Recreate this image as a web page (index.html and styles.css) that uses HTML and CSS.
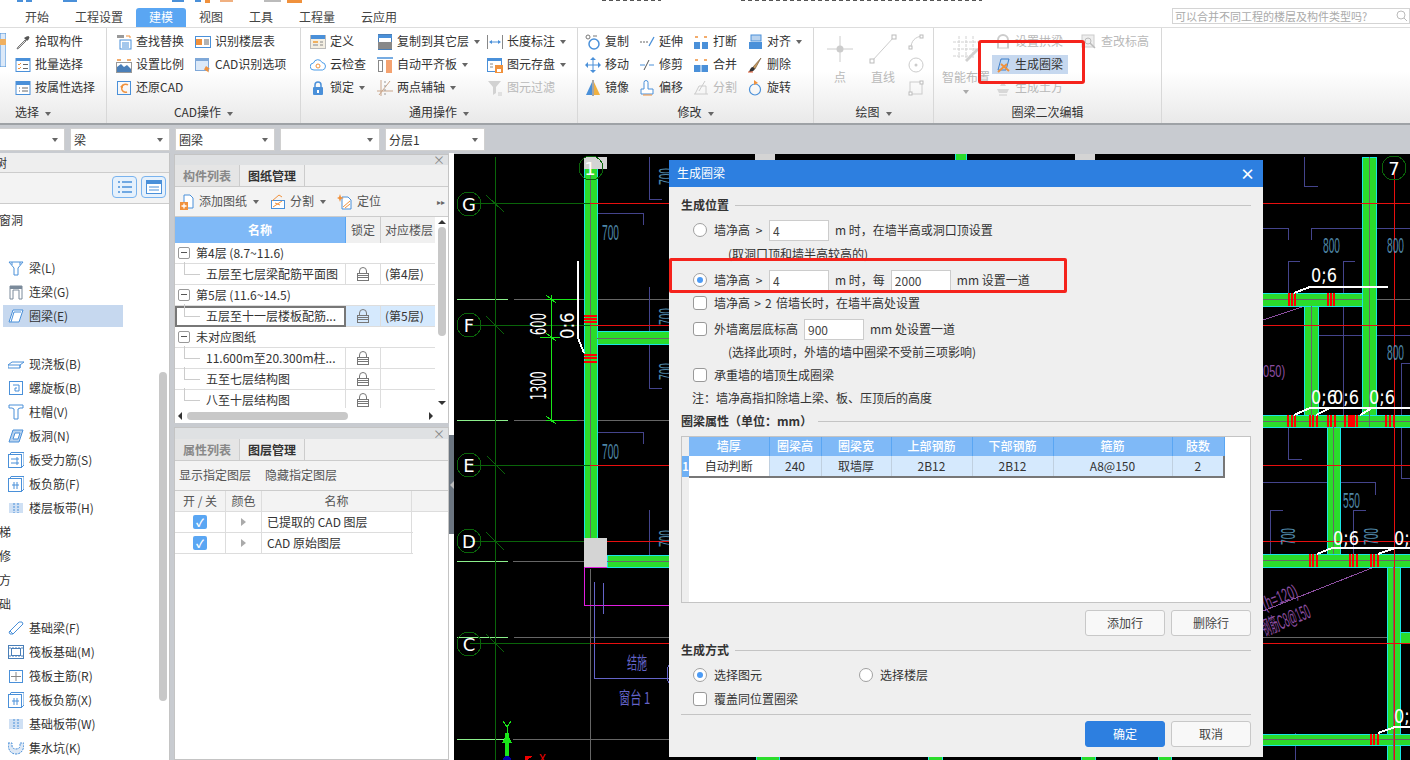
FILE: index.html
```html
<!DOCTYPE html>
<html lang="zh-CN">
<head>
<meta charset="utf-8">
<title>生成圈梁</title>
<link rel="stylesheet" href="styles.css">
</head>
<body>
<svg class="defs" width="0" height="0" aria-hidden="true">
  <symbol id="pick" viewBox="0 0 16 16"><path d="M10 6 3 13l-1 2 2-1 7-7z" fill="#ddd" stroke="#777"/><path d="m9 4 3 3 1.500-1.500 1-2-1-1.500-2 .5z" fill="#555"/></symbol>
  <symbol id="batch" viewBox="0 0 16 16"><rect x="1" y="1.500" width="14" height="13" fill="#fff" stroke="#4a90d9"/><rect x="1" y="1" width="14" height="3" fill="#4a90d9"/><path d="m3 7 1 1 2-2M3 11l1 1 2-2" fill="none" stroke="#f0913c"/><path d="M8 7.500h5M8 11.500h5" stroke="#666"/></symbol>
  <symbol id="attr" viewBox="0 0 16 16"><rect x="1" y="1.500" width="14" height="13" fill="#fff" stroke="#4a90d9"/><rect x="1" y="1" width="14" height="4" fill="#4a90d9"/><path d="M4 8h1M7 8h6M4 11h1M7 11h6" stroke="#666"/></symbol>
  <symbol id="find" viewBox="0 0 16 16"><rect x="1" y="1" width="7" height="3" fill="#999"/><path d="M10 2h4v2" fill="none" stroke="#f0913c"/><rect x="4" y="6" width="11" height="9" fill="#fff" stroke="#4a90d9"/><path d="M6 9h7M6 11h7M6 13h7" stroke="#4a90d9"/></symbol>
  <symbol id="scale" viewBox="0 0 16 16"><path d="M1 3h4M11 3h4" stroke="#f0913c" stroke-width="1.500"/><path d="M1 15V10l4-3 3 3 3-2 4 4v3z" fill="#4a7fb8"/><rect x=".5" y="5.500" width="15" height="10" fill="none" stroke="#999"/></symbol>
  <symbol id="restore" viewBox="0 0 16 16"><rect x="1.500" y="1.500" width="13" height="13" fill="none" stroke="#4a90d9"/><path d="M12 5a4 4 0 1 0-1 7" fill="none" stroke="#f0913c" stroke-width="1.500"/><path d="m4 7 3-3v4z" fill="#f0913c"/></symbol>
  <symbol id="floor" viewBox="0 0 16 16"><rect x=".5" y="2.500" width="15" height="11" fill="#fff" stroke="#4a90d9"/><rect x="1" y="5" width="6" height="6" fill="#f0913c"/><path d="M9 6h5M9 8h5M9 10h5" stroke="#666"/></symbol>
  <symbol id="cadopt" viewBox="0 0 16 16"><rect x=".5" y="1.500" width="13" height="12" fill="#dce9f8" stroke="#7fa8d8"/><rect x="1" y="1" width="13" height="3" fill="#7fa8d8"/><path d="m11 9 4 3-2 .5 1 3-5-3z" fill="#f0913c"/></symbol>
  <symbol id="define" viewBox="0 0 16 16"><rect x=".5" y="1.500" width="15" height="13" fill="#f4efe3" stroke="#bbb"/><rect x="1" y="1" width="14" height="4" fill="#4a90d9"/><rect x="3" y="7" width="5" height="2" fill="#f0b060"/><rect x="3" y="10" width="5" height="2" fill="#bbb"/><path d="M10 8h3M10 11h3" stroke="#888"/></symbol>
  <symbol id="cloud" viewBox="0 0 16 16"><path d="M4 13a3.500 3.500 0 0 1-.5-7A4.500 4.500 0 0 1 12 5.500 3.800 3.800 0 0 1 12.500 13z" fill="#fff" stroke="#4a9be8"/><circle cx="8" cy="9" r="2" fill="none" stroke="#f0913c"/></symbol>
  <symbol id="lockb" viewBox="0 0 16 16"><path d="M5 8V5a3 3 0 0 1 6 0v3" fill="none" stroke="#4a90d9" stroke-width="1.500"/><rect x="3" y="7" width="10" height="8" rx="1" fill="#4a90d9"/><rect x="7" y="10" width="2" height="3" fill="#fff"/></symbol>
  <symbol id="copyf" viewBox="0 0 16 16"><rect x="1.500" y=".5" width="13" height="15" fill="#fff" stroke="#4a7fb8"/><rect x="1" y="1" width="14" height="3" fill="#4a90d9"/><rect x="1" y="8" width="14" height="7" fill="#888"/></symbol>
  <symbol id="align" viewBox="0 0 16 16"><path d="M0 1h16" stroke="#4a90d9" stroke-width="1.500"/><rect x="1.500" y="3.500" width="4" height="11" fill="#fff" stroke="#888"/><rect x="9" y="3" width="6" height="13" fill="#f4a270"/></symbol>
  <symbol id="axis" viewBox="0 0 16 16"><path d="M0 11h16M4 0v16M13 1 2 15" fill="none" stroke="#c9a58a"/><path d="M8 1v14" stroke="#999" stroke-dasharray="2 2"/></symbol>
  <symbol id="dim" viewBox="0 0 16 16"><path d="M.5 1v14M15.500 1v14" stroke="#888"/><path d="M3 8h10" stroke="#4a90d9"/><path d="m2 8 3-2v4zm12 0-3-2v4z" fill="#4a90d9"/></symbol>
  <symbol id="save" viewBox="0 0 16 16"><rect x=".5" y="1.500" width="14" height="13" fill="#fff" stroke="#4a90d9"/><rect x="1" y="1" width="14" height="3" fill="#4a90d9"/><rect x="8" y="8" width="8" height="8" fill="#f0913c"/><rect x="10" y="12" width="4" height="3" fill="#fff"/><path d="M3 7h3M3 10h3" stroke="#888"/></symbol>
  <symbol id="filter" viewBox="0 0 16 16"><path d="M1 1h13L9 7v6l-3 2V7z" fill="#d2d2d2"/><path d="M11 13h4M11 15h4" stroke="#ccc"/></symbol>
  <symbol id="copy" viewBox="0 0 16 16"><circle cx="3" cy="3" r="2" fill="none" stroke="#777"/><circle cx="9" cy="10" r="5" fill="none" stroke="#4a90d9" stroke-width="1.500"/><path d="M8 2h4" stroke="#777"/></symbol>
  <symbol id="move" viewBox="0 0 16 16"><path d="M8 2v12M2 8h12" stroke="#4a90d9"/><path d="m8 0 3 3H5zm0 16-3-3h6zM0 8l3-3v6zm16 0-3 3V5z" fill="#4a90d9"/></symbol>
  <symbol id="mirror" viewBox="0 0 16 16"><path d="M1 15 7 2v13z" fill="#4a90d9"/><path d="M9 15V2l6 13z" fill="#f0b040"/><path d="M8 0v16" stroke="#555"/></symbol>
  <symbol id="extend" viewBox="0 0 16 16"><path d="M1 8h8" stroke="#666" stroke-dasharray="2 1"/><path d="m10 12 5-9" stroke="#4a90d9" stroke-width="1.300"/></symbol>
  <symbol id="trim" viewBox="0 0 16 16"><path d="M1 8h5M10 8h5" stroke="#4a90d9"/><path d="m5 13 5-10" stroke="#555"/></symbol>
  <symbol id="offset" viewBox="0 0 16 16"><path d="M5 9V2.500a2 2 0 0 1 4 0V9h5v5H2V9z" fill="#fff" stroke="#4a90d9"/><path d="M4 15h9" stroke="#f0913c"/></symbol>
  <symbol id="breakk" viewBox="0 0 16 16"><path d="M2 3h3M11 3h3" stroke="#f0913c" stroke-width="1.500"/><rect x="1" y="8" width="6" height="7" fill="#4a90d9"/><rect x="9" y="8" width="6" height="7" fill="#4a90d9"/></symbol>
  <symbol id="merge" viewBox="0 0 16 16"><path d="M2 3h3M11 3h3" stroke="#f0913c" stroke-width="1.500"/><rect x="1" y="8" width="14" height="7" fill="#4a90d9"/><path d="M8 8v7" stroke="#fff"/></symbol>
  <symbol id="split" viewBox="0 0 16 16"><path d="M1 14h14M2 14l4-8h7v8M12 1 6 11" fill="none" stroke="#ccc"/></symbol>
  <symbol id="alignr" viewBox="0 0 16 16"><rect x="4" y="1" width="10" height="6" fill="#b8d2ee" stroke="#4a90d9"/><rect x="2" y="8" width="13" height="7" fill="#4a90d9"/></symbol>
  <symbol id="erase" viewBox="0 0 16 16"><path d="m14 1-8 9 2 2z" fill="#c89a5e" stroke="#6c5030" stroke-width=".6"/><path d="M6 10c-2 0-3 2-4 5 3 0 5-1 6-3z" fill="#333"/><path d="M1 15h5" stroke="#e0562c"/></symbol>
  <symbol id="rotate" viewBox="0 0 16 16"><circle cx="8" cy="9.500" r="5.500" fill="none" stroke="#4a90d9" stroke-width="1.200"/><path d="m7 0 4 3-4 2z" fill="#f0913c"/></symbol>
  <symbol id="arch" viewBox="0 0 16 16"><path d="M3 14V6a5 5 0 0 1 10 0v8" fill="none" stroke="#ccc" stroke-width="2"/><path d="M2 14h12" stroke="#ccc"/></symbol>
  <symbol id="ringgen" viewBox="0 0 16 16"><path d="M3 13 6 2h8l-3 11z" fill="#bcd6f2" stroke="#3f7fc8"/><path d="M3 15 12 7M6 7l8 7" stroke="#f0913c" stroke-width="2"/></symbol>
  <symbol id="earth" viewBox="0 0 16 16"><path d="M8 1 5 6h6zM2 9h12l-2 4H4z" fill="#d8d8d8"/><path d="M4 15h8" stroke="#ccc"/></symbol>
  <symbol id="elev" viewBox="0 0 16 16"><rect x="1" y="1" width="12" height="12" fill="#eee" stroke="#ccc"/><circle cx="7" cy="7" r="3" fill="none" stroke="#bbb"/><path d="m9 9 5 5" stroke="#bbb" stroke-width="1.500"/></symbol>
  <symbol id="ptbig" viewBox="0 0 30 30"><path d="M15 2v26M2 15h26" stroke="#ccc"/><circle cx="15" cy="15" r="3.500" fill="#ccc"/></symbol>
  <symbol id="linebig" viewBox="0 0 30 30"><path d="M4 27 26 3" stroke="#ccc"/><rect x="2" y="25" width="4" height="4" fill="#fff" stroke="#bbb"/><rect x="24" y="1" width="4" height="4" fill="#fff" stroke="#bbb"/></symbol>
  <symbol id="arc" viewBox="0 0 16 16"><path d="M3 14C3 7 7 3 14 2" fill="none" stroke="#ccc"/><rect x="1" y="12" width="3" height="3" fill="#fff" stroke="#bbb"/><rect x="12" y="1" width="3" height="3" fill="#fff" stroke="#bbb"/></symbol>
  <symbol id="circ" viewBox="0 0 16 16"><circle cx="8" cy="8" r="7" fill="none" stroke="#ccc"/><circle cx="8" cy="8" r="1.500" fill="#ccc"/></symbol>
  <symbol id="sq" viewBox="0 0 16 16"><rect x="2" y="2" width="12" height="12" fill="none" stroke="#ccc"/><rect x="12" y="1" width="3" height="3" fill="#fff" stroke="#bbb"/><rect x="1" y="12" width="3" height="3" fill="#fff" stroke="#bbb"/></symbol>
  <symbol id="smart" viewBox="0 0 30 30"><path d="M8 2v22M15 2v22M22 2v22M2 8h26M2 15h26M2 22h18" stroke="#d2d2d2" stroke-dasharray="3 1"/><path d="m14 26 12-12 2 2-12 12z" fill="#d0d0d0"/></symbol>
  <symbol id="tbeam" viewBox="0 0 16 16"><path d="M1 2h14l-5 6v7H6V8z" fill="#fff" stroke="#4a90d9"/><path d="M4 2v3M12 2v3" stroke="#4a90d9"/></symbol>
  <symbol id="tlintel" viewBox="0 0 16 16"><path d="M2 2h12v13h-3V6H5v9H2z" fill="#fff" stroke="#7a8a9a"/><rect x="2" y="2" width="12" height="3" fill="#7a8a9a"/></symbol>
  <symbol id="tring" viewBox="0 0 16 16"><path d="M1 14 5 2h10l-4 12z" fill="#fff" stroke="#4a90d9"/><path d="M3 14 6 4h7" fill="none" stroke="#4a90d9"/></symbol>
  <symbol id="tslab" viewBox="0 0 16 16"><path d="M0 12V9l4-3h12l-4 3v3zM0 9h12v3" fill="#fff" stroke="#4a90d9"/></symbol>
  <symbol id="tspiral" viewBox="0 0 16 16"><rect x="1.500" y="1.500" width="13" height="13" fill="#fff" stroke="#4a90d9"/><path d="M5 5h6v6H7V8h2" fill="none" stroke="#4a90d9"/></symbol>
  <symbol id="tcap" viewBox="0 0 16 16"><path d="M1 1h14v3h-3v0l-2 1v10H6V5L4 4H1z" fill="#fff" stroke="#4a90d9"/></symbol>
  <symbol id="thole" viewBox="0 0 16 16"><path d="M1 14 5 2h10l-4 12z" fill="#b8d2ee" stroke="#4a90d9"/><path d="M5 11 7 5h5l-2 6z" fill="#fff" stroke="#4a90d9"/></symbol>
  <symbol id="trebar" viewBox="0 0 16 16"><rect x=".5" y="2.500" width="13" height="13" fill="#fff" stroke="#4a90d9"/><path d="M2 2.500 3 .5h13V13l-2 2" fill="none" stroke="#4a90d9"/><path d="M3 7h8M3 11h8M9 5v8" stroke="#4a90d9"/></symbol>
  <symbol id="tneg" viewBox="0 0 16 16"><rect x=".5" y="2.500" width="13" height="13" fill="#fff" stroke="#4a90d9"/><path d="M2 2.500 3 .5h13V13l-2 2" fill="none" stroke="#4a90d9"/><path d="M4 9h7M6 6v7M9 6v7" stroke="#4a90d9"/></symbol>
  <symbol id="tstrip" viewBox="0 0 16 16"><rect x="1" y="3" width="14" height="10" fill="#cfe0f4"/><path d="M6 3v10M10 3v10" stroke="#4a90d9" stroke-dasharray="2 1"/></symbol>
  <symbol id="tfbeam" viewBox="0 0 16 16"><path d="m1 12 10-10h3l1 2L5 14H2z" fill="#fff" stroke="#4a90d9"/><path d="m2 11 3 3" stroke="#4a90d9"/></symbol>
  <symbol id="traft" viewBox="0 0 16 16"><rect x=".5" y="1.500" width="15" height="13" fill="#fff" stroke="#4a7fb8"/><rect x="3.500" y="4.500" width="9" height="7" fill="none" stroke="#4a7fb8"/><path d="M1 4h14M1 12h14" stroke="#4a7fb8" stroke-dasharray="2 1"/></symbol>
  <symbol id="tmain" viewBox="0 0 16 16"><rect x="1.500" y="2.500" width="13" height="12" fill="#fff" stroke="#4a90d9"/><path d="M3 8.500h10M8 4v9" stroke="#888"/></symbol>
  <symbol id="tpit" viewBox="0 0 16 16"><path d="M0 3h4v3c0 2 2 3 4 3s4-1 4-3V3h4c0 6-2 11-8 11S0 9 0 3z" fill="#dde8f5" stroke="#4a90d9" stroke-dasharray="2 1"/></symbol>
  <symbol id="adddoc" viewBox="0 0 16 16"><path d="M5 1h6l3 3v10H5z" fill="#fff" stroke="#4a90d9"/><rect x="1" y="8" width="8" height="8" fill="#f0913c"/><path d="M5 9.500v5M2.500 12h5" stroke="#fff" stroke-width="1.300"/></symbol>
  <symbol id="splitdoc" viewBox="0 0 16 16"><rect x="1.500" y="6.500" width="13" height="8" fill="#fff" stroke="#4a90d9"/><path d="M2 7 9 1l3 2M5 9l5 2M3 13l9-6" fill="none" stroke="#f0913c"/></symbol>
  <symbol id="locdoc" viewBox="0 0 16 16"><path d="M5 3h6l3 3v9H5z" fill="#fff" stroke="#4a90d9"/><path d="m3 0 1 3 3 1-3 1-1 3-1-3-2-1 2-1z" fill="#f0913c"/><path d="M6 13l7-6M8 14l5-4" stroke="#f0913c"/></symbol>
  <symbol id="lock" viewBox="0 0 12 14"><path d="M2.500 6V4a3.500 3.500 0 0 1 7 0v2" fill="none" stroke="#777"/><path d="M1 6.500h10M1 8.500h10M1 10.500h10M1 13.500h10" stroke="#777"/><path d="M.5 6v8M11.500 6v8" stroke="#777"/></symbol>
</svg>

<div class="app">
  <svg class="strip" width="1410" height="8" viewBox="0 0 1410 8">
    <rect x="17" y="0" width="6" height="2" fill="#4a90d9"/><rect x="26" y="0" width="6" height="2" fill="#4a90d9"/>
    <rect x="63" y="0" width="14" height="2" fill="#4a90d9"/>
    <rect x="172" y="0" width="12" height="2" fill="#4a90d9"/><rect x="195" y="0" width="6" height="2" fill="#4a90d9"/>
    <rect x="205" y="0" width="5" height="3" fill="#f0913c"/><rect x="220" y="0" width="13" height="2" fill="#f0b080"/>
    <rect x="264" y="0" width="17" height="2" fill="#bbb"/><rect x="287" y="0" width="15" height="3" fill="#f0913c"/>
    <path d="M602 .5H661M741 .5H982" stroke="#555" stroke-dasharray="4 3"/>
  </svg>

  <nav class="tabs">
    <a class="tab">开始</a><a class="tab">工程设置</a><a class="tab active">建模</a><a class="tab">视图</a><a class="tab">工具</a><a class="tab">工程量</a><a class="tab">云应用</a>
    <div class="search"><span>可以合并不同工程的楼层及构件类型吗?</span><svg width="12" height="12" viewBox="0 0 12 12"><circle cx="5" cy="5" r="4" fill="none" stroke="#bbb"/><path d="m8 8 3 3" stroke="#bbb"/></svg></div>
  </nav>

  <section class="ribbon">
    <div class="group g-select">
      <div class="body">
        <div class="col stub"><svg width="6" height="34" viewBox="0 0 6 34"><rect width="6" height="34" fill="#dce9f8" stroke="#4a90d9"/><rect y="6" width="6" height="6" fill="#f0b060"/></svg></div>
        <div class="col">
          <div class="item"><svg class="ic"><use href="#pick"/></svg>拾取构件</div>
          <div class="item"><svg class="ic"><use href="#batch"/></svg>批量选择</div>
          <div class="item"><svg class="ic"><use href="#attr"/></svg>按属性选择</div>
        </div>
      </div>
      <div class="label left">选择<i class="tri"></i></div>
    </div>
    <div class="group g-cad">
      <div class="body">
        <div class="col">
          <div class="item"><svg class="ic"><use href="#find"/></svg>查找替换</div>
          <div class="item"><svg class="ic"><use href="#scale"/></svg>设置比例</div>
          <div class="item"><svg class="ic"><use href="#restore"/></svg>还原CAD</div>
        </div>
        <div class="col">
          <div class="item"><svg class="ic"><use href="#floor"/></svg>识别楼层表</div>
          <div class="item"><svg class="ic"><use href="#cadopt"/></svg>CAD识别选项</div>
        </div>
      </div>
      <div class="label">CAD操作<i class="tri"></i></div>
    </div>
    <div class="group g-common">
      <div class="body">
        <div class="col">
          <div class="item"><svg class="ic"><use href="#define"/></svg>定义</div>
          <div class="item"><svg class="ic"><use href="#cloud"/></svg>云检查</div>
          <div class="item"><svg class="ic"><use href="#lockb"/></svg>锁定<i class="tri"></i></div>
        </div>
        <div class="col">
          <div class="item"><svg class="ic"><use href="#copyf"/></svg>复制到其它层<i class="tri"></i></div>
          <div class="item"><svg class="ic"><use href="#align"/></svg>自动平齐板<i class="tri"></i></div>
          <div class="item"><svg class="ic"><use href="#axis"/></svg>两点辅轴<i class="tri"></i></div>
        </div>
        <div class="col">
          <div class="item"><svg class="ic"><use href="#dim"/></svg>长度标注<i class="tri"></i></div>
          <div class="item"><svg class="ic"><use href="#save"/></svg>图元存盘<i class="tri"></i></div>
          <div class="item off"><svg class="ic"><use href="#filter"/></svg>图元过滤</div>
        </div>
      </div>
      <div class="label">通用操作<i class="tri"></i></div>
    </div>
    <div class="group g-modify">
      <div class="body">
        <div class="col">
          <div class="item"><svg class="ic"><use href="#copy"/></svg>复制</div>
          <div class="item"><svg class="ic"><use href="#move"/></svg>移动</div>
          <div class="item"><svg class="ic"><use href="#mirror"/></svg>镜像</div>
        </div>
        <div class="col">
          <div class="item"><svg class="ic"><use href="#extend"/></svg>延伸</div>
          <div class="item"><svg class="ic"><use href="#trim"/></svg>修剪</div>
          <div class="item"><svg class="ic"><use href="#offset"/></svg>偏移</div>
        </div>
        <div class="col">
          <div class="item"><svg class="ic"><use href="#breakk"/></svg>打断</div>
          <div class="item"><svg class="ic"><use href="#merge"/></svg>合并</div>
          <div class="item off"><svg class="ic"><use href="#split"/></svg>分割</div>
        </div>
        <div class="col">
          <div class="item"><svg class="ic"><use href="#alignr"/></svg>对齐<i class="tri"></i></div>
          <div class="item"><svg class="ic"><use href="#erase"/></svg>删除</div>
          <div class="item"><svg class="ic"><use href="#rotate"/></svg>旋转</div>
        </div>
      </div>
      <div class="label">修改<i class="tri"></i></div>
    </div>
    <div class="group g-draw">
      <div class="body">
        <div class="big off"><svg class="ic30"><use href="#ptbig"/></svg>点</div>
        <div class="big off"><svg class="ic30"><use href="#linebig"/></svg>直线</div>
        <div class="col">
          <div class="item"><svg class="ic"><use href="#arc"/></svg></div>
          <div class="item"><svg class="ic"><use href="#circ"/></svg></div>
          <div class="item"><svg class="ic"><use href="#sq"/></svg></div>
        </div>
      </div>
      <div class="label">绘图<i class="tri"></i></div>
    </div>
    <div class="group g-ring">
      <div class="body">
        <div class="big off"><svg class="ic30"><use href="#smart"/></svg>智能布置<i class="tri soft"></i></div>
        <div class="col">
          <div class="item off"><svg class="ic"><use href="#arch"/></svg>设置拱梁</div>
          <div class="item sel"><svg class="ic"><use href="#ringgen"/></svg>生成圈梁</div>
          <div class="item off"><svg class="ic"><use href="#earth"/></svg>生成土方</div>
        </div>
        <div class="col">
          <div class="item off"><svg class="ic"><use href="#elev"/></svg>查改标高</div>
        </div>
      </div>
      <div class="label">圈梁二次编辑</div>
    </div>
  </section>
  <div class="red-ribbon"></div>

  <div class="combos">
    <div class="combo first"><i class="tri"></i></div>
    <div class="combo">梁<i class="tri"></i></div>
    <div class="combo">圈梁<i class="tri"></i></div>
    <div class="combo"><i class="tri"></i></div>
    <div class="combo">分层1<i class="tri"></i></div>
  </div>

  <main class="main">
    <aside class="nav">
      <div class="nav-head"><span class="cut">树</span></div>
      <div class="nav-tools">
        <button class="tool-btn"><svg width="16" height="14" viewBox="0 0 16 14"><path d="M1 2h2M1 7h2M1 12h2M5 2h10M5 7h10M5 12h10" stroke="#4a90d9" stroke-width="1.500"/></svg></button>
        <button class="tool-btn"><svg width="16" height="14" viewBox="0 0 16 14"><rect x=".5" y=".5" width="15" height="13" fill="#fff" stroke="#4a90d9"/><rect x="1" y="1" width="14" height="3" fill="#4a90d9"/><path d="M3 7h10M3 10h10" stroke="#4a90d9"/></svg></button>
      </div>
      <div class="nav-tree">
        <div class="cat"><span class="cut-cat">门窗洞</span></div>
        <div class="cat"></div>
        <div class="leaf"><svg class="ic"><use href="#tbeam"/></svg>梁(L)</div>
        <div class="leaf"><svg class="ic"><use href="#tlintel"/></svg>连梁(G)</div>
        <div class="leaf sel"><svg class="ic"><use href="#tring"/></svg>圈梁(E)</div>
        <div class="cat"></div>
        <div class="leaf"><svg class="ic"><use href="#tslab"/></svg>现浇板(B)</div>
        <div class="leaf"><svg class="ic"><use href="#tspiral"/></svg>螺旋板(B)</div>
        <div class="leaf"><svg class="ic"><use href="#tcap"/></svg>柱帽(V)</div>
        <div class="leaf"><svg class="ic"><use href="#thole"/></svg>板洞(N)</div>
        <div class="leaf"><svg class="ic"><use href="#trebar"/></svg>板受力筋(S)</div>
        <div class="leaf"><svg class="ic"><use href="#tneg"/></svg>板负筋(F)</div>
        <div class="leaf"><svg class="ic"><use href="#tstrip"/></svg>楼层板带(H)</div>
        <div class="cat"><span class="cut-cat">楼梯</span></div>
        <div class="cat"><span class="cut-cat">装修</span></div>
        <div class="cat"><span class="cut-cat">土方</span></div>
        <div class="cat"><span class="cut-cat">基础</span></div>
        <div class="leaf"><svg class="ic"><use href="#tfbeam"/></svg>基础梁(F)</div>
        <div class="leaf"><svg class="ic"><use href="#traft"/></svg>筏板基础(M)</div>
        <div class="leaf"><svg class="ic"><use href="#tmain"/></svg>筏板主筋(R)</div>
        <div class="leaf"><svg class="ic"><use href="#tneg"/></svg>筏板负筋(X)</div>
        <div class="leaf"><svg class="ic"><use href="#tstrip"/></svg>基础板带(W)</div>
        <div class="leaf"><svg class="ic"><use href="#tpit"/></svg>集水坑(K)</div>
      </div>
      <div class="nav-thumb"></div>
    </aside>

    <section class="side">
      <div class="panel top-panel">
        <div class="p-title">×</div>
        <div class="p-tabs"><span class="p-tab">构件列表</span><span class="p-tab on">图纸管理</span></div>
        <div class="p-tools">
          <span class="p-tool"><svg class="ic"><use href="#adddoc"/></svg>添加图纸<i class="tri"></i></span>
          <span class="p-tool"><svg class="ic"><use href="#splitdoc"/></svg>分割<i class="tri"></i></span>
          <span class="p-tool"><svg class="ic"><use href="#locdoc"/></svg>定位</span>
          <span class="more">▸▸</span>
        </div>
        <div class="dwg-wrap">
          <div class="dwg">
            <div class="d-row head"><span class="c-name blue">名称</span><span class="c-lock">锁定</span><span class="c-floor">对应楼层</span></div>
            <div class="d-row grp"><i class="minus"></i>第4层 (8.7~11.6)</div>
            <div class="d-row"><span class="c-name leafname"><i class="conn"></i>五层至七层梁配筋平面图</span><span class="c-lock"><svg class="lk"><use href="#lock"/></svg></span><span class="c-floor">(第4层)</span></div>
            <div class="d-row grp"><i class="minus"></i>第5层 (11.6~14.5)</div>
            <div class="d-row cur"><span class="c-name leafname white"><i class="conn"></i>五层至十一层楼板配筋...</span><span class="c-lock"><svg class="lk"><use href="#lock"/></svg></span><span class="c-floor">(第5层)</span></div>
            <div class="d-row grp"><i class="minus"></i>未对应图纸</div>
            <div class="d-row"><span class="c-name leafname"><i class="conn"></i>11.600m至20.300m柱...</span><span class="c-lock"><svg class="lk"><use href="#lock"/></svg></span><span class="c-floor"></span></div>
            <div class="d-row"><span class="c-name leafname"><i class="conn"></i>五至七层结构图</span><span class="c-lock"><svg class="lk"><use href="#lock"/></svg></span><span class="c-floor"></span></div>
            <div class="d-row"><span class="c-name leafname"><i class="conn"></i>八至十层结构图</span><span class="c-lock"><svg class="lk"><use href="#lock"/></svg></span><span class="c-floor"></span></div>
          </div>
          <div class="vscroll"><i class="up"></i><div class="v-thumb"></div><i class="down"></i></div>
        </div>
        <div class="hscroll"><i class="lft"></i><div class="h-thumb"></div><i class="rgt"></i></div>
      </div>
      <div class="panel low-panel">
        <div class="p-title">×</div>
        <div class="p-tabs"><span class="p-tab">属性列表</span><span class="p-tab on">图层管理</span></div>
        <div class="p-tools small"><span>显示指定图层</span><span>隐藏指定图层</span></div>
        <div class="l-row head"><span class="l-a">开 / 关</span><span class="l-b">颜色</span><span class="l-c">名称</span></div>
        <div class="l-row"><span class="l-a"><i class="tick">✓</i></span><span class="l-b"><i class="play"></i></span><span class="l-c txt">已提取的 CAD 图层</span></div>
        <div class="l-row"><span class="l-a"><i class="tick">✓</i></span><span class="l-b"><i class="play"></i></span><span class="l-c txt">CAD 原始图层</span></div>
      </div>
    </section>

    <div class="splitter"><div class="grip"><i></i></div></div>

    <section class="canvas">
      <svg class="cad" width="956" height="606" viewBox="454 154 956 606">
        <g class="lg-line"><path d="M457 299H508M457 420H508M457 561H508M457 637H508M457 739H507"/></g>
        <g class="gr-line"><path d="M514 299H670M514 420H670M513 561H584M514 637H670M513 739H670M590 569V760M1376 299H1410M1263 637H1387"/></g>

        <!-- frames -->
        <g class="b-line">
          <path d="M586 227V213H643V225M586 446V432H643V444M649 157V199H662M649 287V388H662M649 510V565H662"/>
          <path d="M1304 157V186H1318M1263 228H1288V240M1311 240V228H1410M1288 293V261H1300M1355 261H1343V415M1307 347V335H1410M1410 363H1401V478H1410M1288 427V459H1302M1263 482H1375V495M1283 510H1270V563H1283M1366 510H1353V567M1295 733V760"/>
        </g>
        <path class="mag" d="M584 567V605H670M584 567H670"/>
        <path class="pur" d="M594 582V678H670M603 583V614"/>
        <path class="pur" d="M670 662a14 20 0 0 0 0 24" />
        <path class="vio" d="M1263 320 1305 306M1263 611 1387 562"/>

        <!-- walls -->
        <g class="wall">
          <rect x="584" y="157" width="13" height="383"/>
          <rect x="597" y="331" width="80" height="13"/>
          <rect x="607" y="555" width="70" height="12"/>
          <rect x="1362" y="157" width="14" height="270"/>
          <rect x="1255" y="293" width="107" height="13"/>
          <rect x="1304" y="306" width="14" height="109"/>
          <rect x="1255" y="415" width="155" height="12"/>
          <rect x="1327" y="427" width="13" height="127"/>
          <rect x="1255" y="554" width="155" height="13"/>
          <rect x="1387" y="567" width="13" height="193"/>
          <rect x="1400" y="632" width="12" height="11"/>
          <rect x="1255" y="734" width="155" height="11"/>
          <rect x="756" y="750" width="23" height="12"/><rect x="928" y="750" width="14" height="12"/><rect x="1081" y="750" width="14" height="12"/><rect x="1158" y="750" width="13" height="12"/>
          <rect x="955" y="150" width="11" height="12"/>
        </g>
        <path class="gr-line" d="M590 160V540M597 338H670M1369 157V427M1263 299H1362M1311 306V415M1263 421H1410M1333 427V554M1263 560H1410M1393 567V760M1263 739H1410M607 561H670"/>

        <!-- grid -->
        <g class="g-line">
          <path d="M495 157V760M470 203H590M470 325H590M470 465H590M470 541H584M470 643H590"/>
          <path d="m486 195 18 17M486 316 504 334M487 456 505 474M486 532 504 550M486 634 504 652"/>
        </g>
        <g class="r-line">
          <path d="M590 203H1410M590 325H1410M590 465H1410M607 541H1410M590 643H1410M1394 172V760"/>
        </g>

        <!-- squares -->
        <rect class="sq" x="584" y="157" width="23" height="12"/>
        <rect class="sq" x="584" y="538" width="23" height="29"/>
        <rect class="sq" x="755" y="154" width="20" height="6"/>
        <rect class="sq" x="1075" y="154" width="20" height="6"/>

        <!-- red ties -->
        <g class="tie">
          <rect x="584" y="315" width="13" height="1.500"/><rect x="584" y="318" width="13" height="1.500"/><rect x="584" y="321" width="13" height="1.500"/>
          <rect x="584" y="354" width="13" height="1.500"/><rect x="584" y="357" width="13" height="1.500"/><rect x="584" y="361" width="13" height="1.500"/>
          <path class="t3" d="M1288 293h2v13h-2zM1291 293h2v13h-2zM1294 293h2v13h-2zM1327 293h2v13h-2zM1330 293h2v13h-2zM1333 293h2v13h-2z"/>
          <path class="t3" d="M1287 415h2v12h-2zM1291 415h2v12h-2zM1294 415h2v12h-2zM1309 415h2v12h-2zM1312 415h2v12h-2zM1316 415h2v12h-2zM1327 415h2v12h-2zM1330 415h2v12h-2zM1334 415h2v12h-2zM1344 415h2v12h-2zM1348 415h7v12h-7zM1356 415h2v12h-2zM1385 415h2v12h-2zM1389 415h2v12h-2zM1393 415h2v12h-2z"/>
          <path class="t3" d="M1309 554h2v13h-2zM1312 554h2v13h-2zM1316 554h2v13h-2zM1349 554h2v13h-2zM1352 554h2v13h-2zM1356 554h2v13h-2zM1370 554h2v13h-2zM1373 554h2v13h-2zM1377 554h2v13h-2zM1370 734h2v11h-2zM1373 734h2v11h-2zM1377 734h2v11h-2z"/>
        </g>

        <!-- dimensions -->
        <g class="dim">
          <path d="M551 295V422M546 299H577M546 420H577M540 337H560"/>
          <path d="m546 295 10 8M546 416l10 8M546 333l10 8"/>
        </g>
        <path class="lead" d="M578 261V338L584 353"/>
        <path class="lead" d="M1294 293 1310 287H1388M1294 415 1310 408H1410M1316 415 1330 408M1360 415 1372 408M1317 554 1332 548H1410M1378 554 1395 548M1378 733 1395 727H1410"/>

        <text class="wt" transform="translate(546,335) rotate(-90) scale(.77,1.45)">600</text>
        <text class="wt" transform="translate(546,400) rotate(-90) scale(.75,1.45)">1300</text>
        <text class="wt big6" transform="translate(574,339) rotate(-90) scale(.87,1)">0:6</text>
        <text class="wt big6" transform="translate(1311,282) scale(.85,1)">0;6</text>
        <text class="wt big6" transform="translate(1311,404) scale(.85,1)">0;6</text>
        <text class="wt big6" transform="translate(1333,404) scale(.85,1)">0;6</text>
        <text class="wt big6" transform="translate(1369,404) scale(.85,1)">0;6</text>
        <text class="wt big6" transform="translate(1333,545) scale(.85,1)">0;6</text>
        <text class="wt big6" transform="translate(1394,545) scale(.85,1)">0;</text>
        <text class="wt big6" transform="translate(1394,723) scale(.85,1)">0;</text>

        <g class="num">
          <text transform="translate(602,240) scale(.6,1.3)">700</text>
          <text transform="translate(602,459) scale(.6,1.3)">700</text>
          <text transform="translate(1323,253) scale(.6,1.3)">800</text>
          <text transform="translate(1387,253) scale(.6,1.3)">800</text>
          <text transform="translate(1387,360) scale(.6,1.3)">800</text>
          <text transform="translate(1343,508) scale(.6,1.3)">550</text>
          <text transform="translate(673,185) rotate(-90) scale(.6,1.2)">700</text>
          <text transform="translate(673,325) rotate(-90) scale(.6,1.2)">700</text>
          <text transform="translate(673,380) rotate(-90) scale(.6,1.2)">700</text>
          <text transform="translate(673,547) rotate(-90) scale(.6,1.2)">700</text>
          <text transform="translate(1295,545) rotate(-90) scale(.6,1.2)">700</text>
          <text transform="translate(1378,545) rotate(-90) scale(.6,1.2)">700</text>
        </g>
        <text class="cn" transform="translate(627,669) scale(.67,1.1)">结施</text>
        <text class="cn" transform="translate(619,704) scale(.75,1.1)">窗台 1</text>
        <text class="pt" transform="translate(1263,377) scale(.65,1)">050)</text>
        <text class="pt" transform="translate(1265,610) rotate(-22) scale(.62,1.1)">(h=120)</text>
        <text class="pt" transform="translate(1265,636) rotate(-22) scale(.5,1.2)">钢筋C8@150</text>

        <g class="axis-c">
          <circle cx="469" cy="204" r="12"/><circle cx="469" cy="325" r="12"/><circle cx="469" cy="465" r="12"/><circle cx="469" cy="541" r="12"/><circle cx="469" cy="644" r="12"/><circle cx="591" cy="168" r="12"/><circle cx="1394" cy="168" r="12"/>
        </g>
        <g class="axis-t">
          <text x="469" y="211">G</text><text x="469" y="332">F</text><text x="469" y="472">E</text><text x="469" y="548">D</text><text x="469" y="651">C</text><text x="590" y="175">1</text><text x="1394" y="175">7</text>
        </g>
        <path class="arrow" d="M507 733V760" />
        <path class="arrow-h" d="m507 733-5 10h10z"/>
        <path class="arrow-y" d="m503 721 4 6 4-6M507 727v6"/>
        <path class="arrow-x" d="M525 756h8l-6 4h-2z"/>
        <text class="xlabel" x="539" y="763">X</text>
        <circle class="origin" cx="507" cy="760" r="4"/>
      </svg>

      <div class="dialog">
        <header class="d-title"><span>生成圈梁</span><span class="close">×</span></header>
        <div class="d-body">
          <div class="sect m9"><b>生成位置</b></div>
          <div class="row m5"><i class="radio"></i><span class="lbl">墙净高 &gt;</span><input class="inp" value="4"><span class="after">m 时，在墙半高或洞口顶设置</span></div>
          <div class="row note m2">(取洞口顶和墙半高较高的)</div>
          <div class="row m4"><i class="radio on"></i><span class="lbl">墙净高 &gt;</span><input class="inp" value="4"><span class="after">m 时，每</span><input class="inp g" value="2000"><span class="after">mm 设置一道</span></div>
          <div class="row m1"><i class="check"></i><span class="gt">墙净高 &gt; 2 倍墙长时，在墙半高处设置</span></div>
          <div class="row m4"><i class="check"></i><span class="lbl2">外墙离层底标高</span><input class="inp" value="900"><span class="after">mm 处设置一道</span></div>
          <div class="row note m1">(选择此项时，外墙的墙中圈梁不受前三项影响)</div>
          <div class="row m1"><i class="check"></i><span>承重墙的墙顶生成圈梁</span></div>
          <div class="row noted m1">注：墙净高指扣除墙上梁、板、压顶后的高度</div>
          <div class="sect m3"><b>圈梁属性（单位：mm）</b></div>
          <div class="tbox">
            <table class="grid">
              <colgroup><col class="w0"><col class="w1"><col class="w2"><col class="w3"><col class="w4"><col class="w4"><col class="w5"><col class="w2"></colgroup>
              <thead><tr><th class="corner"></th><th>墙厚</th><th>圈梁高</th><th>圈梁宽</th><th>上部钢筋</th><th>下部钢筋</th><th>箍筋</th><th>肢数</th></tr></thead>
              <tbody><tr><td class="rn">1</td><td class="first">自动判断</td><td>240</td><td>取墙厚</td><td>2B12</td><td>2B12</td><td>A8@150</td><td>2</td></tr></tbody>
            </table>
          </div>
          <div class="btns m7"><button class="btn">添加行</button><button class="btn">删除行</button></div>
          <div class="sect m5"><b>生成方式</b></div>
          <div class="row m5"><i class="radio on"></i><span class="opt">选择图元</span><i class="radio"></i><span>选择楼层</span></div>
          <div class="row m2"><i class="check"></i><span>覆盖同位置圈梁</span></div>
          <div class="rule"></div>
          <div class="btns m6"><button class="btn primary">确定</button><button class="btn">取消</button></div>
        </div>
        <div class="red-dialog"></div>
      </div>
    </section>
  </main>
</div>
</body>
</html>
```

FILE: styles.css
```css
* { box-sizing: border-box; }
html, body { margin: 0; height: 100%; overflow: hidden; }
body { font: 12px/1.2 "Noto Sans CJK SC", "Liberation Sans", sans-serif; color: #333; background: #c8cbd0; }
.defs { position: absolute; }
.app { position: relative; width: 1410px; height: 760px; overflow: hidden; display: flex; flex-direction: column; }
.strip { display: block; background: #fff; flex: none; }
i { font-style: normal; }

/* tabs */
.tabs { flex: none; height: 20px; background: #fff; display: flex; padding-left: 12px; border-bottom: 1px solid #ddd; }
.tab { height: 19px; line-height: 18px; padding: 0 13px; color: #444; }
.tab.active { background: #5aa6f3; color: #fff; border-radius: 3px 3px 0 0; }
.search { margin-left: auto; width: 238px; height: 16px; border: 1px solid #d4d4d4; display: flex; align-items: center; justify-content: space-between; padding: 0 1px 0 2px; font-size: 11px; line-height: 14px; color: #aaa; }

/* ribbon */
.ribbon { flex: none; height: 97px; display: flex; background: linear-gradient(#fff 45%, #e9e9e9); border-bottom: 2px solid #9ea2a6; }
.group { display: flex; flex-direction: column; border-right: 1px solid #d8d8d8; flex: none; }
.body { height: 74px; display: flex; padding-top: 2px; }
.col { display: flex; flex-direction: column; flex: none; }
.item { height: 23px; display: flex; align-items: center; gap: 4px; white-space: nowrap; }
.item.off, .big.off { color: #b9b9b9; }
.item.sel { background: #c6d8ef; height: 19px; margin: 2px 0; color: #333; width: 76px; }
.ic { width: 16px; height: 16px; flex: none; }
.ic30 { width: 30px; height: 30px; display: block; flex: none; }
.tri { display: inline-block; width: 0; height: 0; border: 3.500px solid transparent; border-top: 4px solid #666; border-bottom: 0; margin-left: 6px; vertical-align: middle; }
.item .tri { margin-left: 1px; }
.tri.soft { border-top-color: #aaa; margin: 0; }
.label { height: 20px; line-height: 20px; text-align: center; color: #333; }
.label.left { text-align: left; padding-left: 15px; }

.g-select { width: 107px; }
.g-select .stub { width: 15px; padding-top: 3px; }
.g-cad { width: 194px; }
.g-cad .body { padding-left: 9px; }
.g-cad .col:first-child { width: 79px; }
.g-common { width: 277px; }
.g-common .body { padding-left: 9px; }
.g-common .col:nth-child(1) { width: 67px; }
.g-common .col:nth-child(2) { width: 110px; }
.g-modify { width: 236px; }
.g-modify .body { padding-left: 7px; }
.g-modify .col { width: 54px; }
.g-draw { width: 120px; }
.g-draw .body { padding-left: 11px; }
.big { display: flex; flex-direction: column; align-items: center; text-align: center; padding-top: 4px; gap: 5px; line-height: 16px; flex: none; }
.g-draw .big { width: 30px; margin-right: 13px; }
.g-draw .big + .big { margin-right: 10px; }
.g-ring { width: 228px; }
.g-ring .body { padding-left: 6px; }
.g-ring .big { width: 52px; }
.g-ring .col { width: 89px; }
.g-ring .item { padding-left: 3px; }
.g-ring .col:nth-child(3) { width: 70px; }
.g-ring .col:nth-child(3) .item { padding-left: 0; }
.red-ribbon { position: absolute; left: 978px; top: 40px; width: 107px; height: 44px; border: 3px solid #f5231c; border-radius: 3px; }

/* combos */
.combos { flex: none; height: 28px; padding-top: 3px; display: flex; gap: 5px; margin-left: -35px; background: #c8cbd0; }
.combo { width: 100px; height: 23px; background: #fff; border: 1px solid #d0d0d0; line-height: 21px; padding-left: 3px; position: relative; flex: none; }
.combo .tri { position: absolute; right: 6px; top: 9px; margin: 0; }

/* main */
.main { flex: 1; min-height: 0; display: flex; }
.nav { width: 170px; flex: none; background: #fff; border-right: 1px solid #c4c4c4; position: relative; overflow: hidden; display: flex; flex-direction: column; }
.nav-head { height: 20px; background: #eee; border-bottom: 1px solid #ccc; line-height: 19px; }
.cut { margin-left: -5px; display: inline-block; }
.nav-tools { height: 31px; flex: none; background: #f3f3f3; border-bottom: 1px solid #ccc; display: flex; justify-content: flex-end; gap: 4px; padding: 3px 3px 0 0; }
.tool-btn { width: 25px; height: 22px; padding: 0; background: #e6f1fc; border: 1px solid #79b3ee; border-radius: 4px; display: flex; align-items: center; justify-content: center; }
.nav-tree { padding-top: 3px; }
.cat { height: 24px; line-height: 26px; white-space: nowrap; }
.cut-cat { display: inline-block; margin-left: -13px; }
.leaf { width: 120px; height: 22px; margin: 2px 0 0 3px; padding-left: 5px; display: flex; align-items: center; gap: 5px; white-space: nowrap; }
.leaf.sel { background: #c6d8ef; }
.nav-thumb { position: absolute; left: 159px; top: 219px; width: 8px; height: 329px; background: #c8c8c8; border-radius: 4px; }

.side { width: 275px; flex: none; margin-left: 4px; display: flex; flex-direction: column; gap: 4px; padding-top: 1px; }
.panel { border: 1px solid #c4c4c4; background: #fff; display: flex; flex-direction: column; }
.top-panel { height: 269px; flex: none; }
.low-panel { flex: 1; min-height: 0; }
.p-title { height: 11px; flex: none; background: #dfe1e3; color: #888; text-align: right; padding-right: 3px; font-size: 12px; line-height: 11px; }
.top-panel .p-title { height: 10px; line-height: 10px; }
.p-tabs { height: 22px; flex: none; display: flex; background: #f0f0f0; border-bottom: 1px solid #ccc; }
.p-tab { width: 65px; text-align: center; line-height: 21px; background: #e5e5e5; color: #888; font-weight: 700; border-right: 1px solid #ccc; }
.p-tab.on { background: #eee; color: #333; }
.p-tools { height: 30px; flex: none; display: flex; align-items: center; background: #f3f3f3; border-bottom: 1px solid #ccc; padding-left: 4px; gap: 11px; position: relative; }
.p-tools.small { padding-left: 4px; gap: 14px; color: #555; }
.p-tool { display: flex; align-items: center; gap: 4px; color: #555; }
.p-tool .tri { margin-left: 2px; }
.more { position: absolute; right: 3px; font-size: 8px; color: #666; }
.dwg-wrap { height: 191px; flex: none; display: flex; overflow: hidden; }
.dwg { width: 260px; flex: none; overflow: hidden; }
.d-row { height: 21px; display: flex; align-items: center; border-bottom: 1px solid #ddd; line-height: 20px; white-space: nowrap; }
.d-row.head { height: 26px; background: #f0f0f0; color: #555; border-bottom: 0; }
.d-row.grp { padding-left: 3px; }
.d-row.cur { background: #d5e9fd; }
.c-name { width: 171px; height: 100%; border-right: 1px solid #ddd; display: flex; align-items: center; flex: none; }
.c-name.blue { background: #7fb9f7; color: #fff; justify-content: center; font-weight: 700; border-right-color: #5aa6f3; }
.c-lock { width: 35px; height: 100%; border-right: 1px solid #ddd; display: flex; align-items: center; justify-content: center; flex: none; }
.c-floor { width: 54px; padding-left: 4px; overflow: hidden; flex: none; }
.head .c-lock { border-right-color: #ccc; }
.leafname { padding-left: 9px; }
.leafname.white { background: #fff; outline: 2px solid #777; outline-offset: -2px; height: 21px; }
.conn { width: 16px; height: 1px; background: #ccc; margin-right: 6px; flex: none; position: relative; }
.conn::before { content: ""; position: absolute; left: 0; bottom: 0; width: 1px; height: 13px; background: #ccc; }
.minus { width: 12px; height: 12px; border: 1px solid #999; border-radius: 2px; margin-right: 6px; position: relative; flex: none; }
.minus::after { content: ""; position: absolute; left: 2px; right: 2px; top: 4px; height: 1px; background: #555; }
.lk { width: 12px; height: 14px; }
.vscroll { width: 14px; flex: none; background: #fff; padding: 0 3px; display: flex; flex-direction: column; align-items: center; }
.up, .down, .lft, .rgt { display: block; width: 0; height: 0; border: 4px solid transparent; flex: none; }
.up { border-bottom: 4px solid #333; border-top: 0; margin-top: 3px; }
.v-thumb { width: 8px; height: 109px; background: #c8c8c8; border-radius: 4px; margin-top: 3px; }
.down { border-top: 4px solid #333; border-bottom: 0; margin-top: auto; margin-bottom: 3px; }
.hscroll { height: 15px; flex: none; background: #fff; display: flex; align-items: center; padding: 0 3px; }
.lft { border-right: 4px solid #333; border-left: 0; margin-right: 5px; }
.rgt { border-left: 4px solid #333; border-right: 0; margin-left: 81px; }
.h-thumb { width: 161px; height: 8px; background: #c8c8c8; border-radius: 4px; }

.l-row { display: flex; height: 21px; line-height: 20px; width: 238px; border-bottom: 1px solid #ddd; flex: none; }
.l-row.head { background: #f3f3f3; color: #555; width: auto; }
.l-a { width: 51px; text-align: center; border-right: 1px solid #ddd; display: flex; justify-content: center; align-items: center; }
.l-b { width: 36px; text-align: center; border-right: 1px solid #ddd; display: flex; justify-content: center; align-items: center; }
.l-c { width: 150px; text-align: center; border-right: 1px solid #ddd; }
.l-c.txt { text-align: left; padding-left: 5px; }
.tick { width: 14px; height: 14px; background: #5aa6f3; border-radius: 2px; color: #fff; font-size: 11px; line-height: 14px; font-weight: 700; text-align: center; }
.play { width: 0; height: 0; border-left: 5px solid #aaa; border-top: 4px solid transparent; border-bottom: 4px solid transparent; }

.splitter { width: 5px; flex: none; background: #fff; padding-top: 282px; }
.grip { height: 99px; background: #6b7580; display: flex; align-items: center; justify-content: center; }
.grip i { width: 0; height: 0; border-right: 4px solid #bbb; border-top: 4px solid transparent; border-bottom: 4px solid transparent; }

/* canvas */
.canvas { flex: 1; position: relative; background: #000; margin-top: 1px; overflow: hidden; }
.cad { display: block; shape-rendering: crispEdges; }
.g-line { stroke: #0a640a; fill: none; }
.r-line { stroke: #e80f0f; fill: none; }
.lg-line { stroke: #8cf08c; fill: none; }
.gr-line { stroke: #666; fill: none; }
.b-line { stroke: #44448c; fill: none; }
.mag { stroke: #e01ee0; fill: none; }
.pur { stroke: #6464c8; fill: none; }
.vio { stroke: #8c4ea0; fill: none; }
.wall rect { fill: #2bdc2b; stroke: #19e6e6; }
.sq { fill: #d4d4d4; }
.tie rect, .tie path { fill: #f00; }
.dim { stroke: #19e619; fill: none; }
.lead { stroke: #fff; stroke-width: 2; fill: none; }
.wt { fill: #fff; font-family: "DejaVu Sans", sans-serif; font-size: 15px; }
.big6 { font-size: 19px; }
.num text { fill: #4f87a8; font-family: "Liberation Sans", sans-serif; font-size: 17px; }
.cn { fill: #6464c8; font-size: 15px; }
.pt { fill: #8c4ea0; font-family: "Liberation Sans", "Noto Sans CJK SC", sans-serif; font-size: 17px; }
.axis-c circle { fill: none; stroke: #0a640a; }
.axis-t text { fill: #fff; font-family: "DejaVu Sans", sans-serif; font-size: 18px; text-anchor: middle; }
.arrow { stroke: #19e619; stroke-width: 4; fill: none; }
.arrow-h { fill: #19e619; }
.arrow-y { stroke: #19e619; fill: none; }
.arrow-x { fill: #e00; }
.xlabel { fill: #e00; font-size: 12px; }
.origin { fill: #00a; }

/* dialog */
.dialog { position: absolute; left: 215px; top: 6px; width: 594px; height: 597px; background: #efefef; display: flex; flex-direction: column; }
.d-title { height: 27px; flex: none; background: #2d7fe0; color: #fff; display: flex; justify-content: space-between; align-items: center; padding: 0 8px 0 8px; }
.close { font-size: 15px; line-height: 15px; font-weight: 700; }
.d-body { padding: 0 12px; color: #333; }
.sect { height: 18px; display: flex; align-items: center; gap: 6px; }
.sect b { font-weight: 700; }
.sect::after { content: ""; flex: 1; height: 1px; background: #c4c4c4; }
.row { height: 22px; display: flex; align-items: center; padding-left: 12px; white-space: nowrap; }
.note { padding-left: 47px; }
.noted { padding-left: 11px; }
.radio { width: 14px; height: 14px; border: 1px solid #a0a0a0; border-radius: 50%; background: #fff; margin-right: 7px; flex: none; position: relative; }
.radio.on::after { content: ""; position: absolute; left: 3px; top: 3px; width: 6px; height: 6px; border-radius: 50%; background: #4c9bf5; }
.check { width: 14px; height: 14px; border: 1px solid #999; border-radius: 3px; background: #fff; margin-right: 7px; flex: none; }
.lbl { width: 55px; word-spacing: 3px; }
.gt { word-spacing: 1.500px; }
.lbl2 { width: 90px; }
.inp { width: 60px; height: 21px; border: 1px solid #ccc; background: #fff; font: inherit; color: #444; padding: 0 3px; outline: 0; }
.after { margin: 0 6px; }
.opt { width: 145px; }
.tbox { height: 167px; margin-top: 6px; border: 1px solid #c4c4c4; background: linear-gradient(to right, #eee 7px, #fff 7px); overflow: hidden; }
.grid { border-collapse: collapse; table-layout: fixed; width: 542px; }
.w0 { width: 7px; } .w1 { width: 80px; } .w2 { width: 52px; } .w3 { width: 70px; } .w4 { width: 81px; } .w5 { width: 119px; }
.grid th { height: 19px; padding: 0; background: #7fb9f7; color: #fff; font-weight: 500; border-right: 1px solid #5aa6f3; }
.grid th.corner { background: #eee; border: 0; }
.grid td { height: 21px; padding: 0; text-align: center; background: #d5e9fd; border-right: 1px solid #c0d0e0; border-bottom: 2px solid #777; }
.grid td:last-child { border-right: 2px solid #777; }
.grid td.first { background: #fff; }
.grid td.rn { background: #6eb0f5; color: #fff; font-weight: 700; border: 0; font-size: 11px; }
.btns { display: flex; justify-content: flex-end; gap: 6px; }
.btn { width: 80px; height: 26px; background: #f8f8f8; border: 1px solid #c8c8c8; border-radius: 3px; font: inherit; color: #444; padding: 0; }
.btn.primary { background: #2d7fe0; border-color: #2d7fe0; color: #fff; }
.rule { height: 1px; background: #c4c4c4; margin-top: 4px; }
.m1 { margin-top: 1px; } .m2 { margin-top: 2px; } .m3 { margin-top: 3px; } .m4 { margin-top: 4px; } .m5 { margin-top: 5px; } .m6 { margin-top: 6px; } .m7 { margin-top: 7px; } .m9 { margin-top: 9px; }
.red-dialog { position: absolute; left: 0; top: 98px; width: 398px; height: 35px; border: 3px solid #f5231c; border-radius: 2px; }
```
